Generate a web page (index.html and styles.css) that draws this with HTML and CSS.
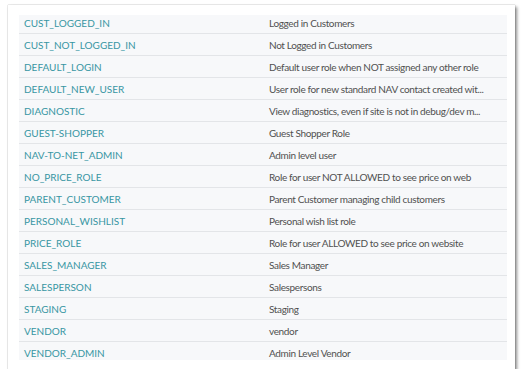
FILE: index.html
```html
<!DOCTYPE html>
<html>
<head>
<meta charset="utf-8">
<link rel="stylesheet" href="styles.css">
</head>
<body>
<div class="card">
  <div class="table">
    <div class="rows">
      <div class="row"><span class="code">CUST_LOGGED_IN</span><span class="desc">Logged in Customers</span></div>
      <div class="row"><span class="code">CUST_NOT_LOGGED_IN</span><span class="desc">Not Logged in Customers</span></div>
      <div class="row"><span class="code">DEFAULT_LOGIN</span><span class="desc">Default user role when NOT assigned any other role</span></div>
      <div class="row"><span class="code">DEFAULT_NEW_USER</span><span class="desc">User role for new standard NAV contact created wit...</span></div>
      <div class="row"><span class="code">DIAGNOSTIC</span><span class="desc">View diagnostics, even if site is not in debug/dev m...</span></div>
      <div class="row"><span class="code">GUEST-SHOPPER</span><span class="desc">Guest Shopper Role</span></div>
      <div class="row"><span class="code">NAV-TO-NET_ADMIN</span><span class="desc">Admin level user</span></div>
      <div class="row"><span class="code">NO_PRICE_ROLE</span><span class="desc">Role for user NOT ALLOWED to see price on web</span></div>
      <div class="row"><span class="code">PARENT_CUSTOMER</span><span class="desc">Parent Customer managing child customers</span></div>
      <div class="row"><span class="code">PERSONAL_WISHLIST</span><span class="desc">Personal wish list role</span></div>
      <div class="row"><span class="code">PRICE_ROLE</span><span class="desc">Role for user ALLOWED to see price on website</span></div>
      <div class="row"><span class="code">SALES_MANAGER</span><span class="desc">Sales Manager</span></div>
      <div class="row"><span class="code">SALESPERSON</span><span class="desc">Salespersons</span></div>
      <div class="row"><span class="code">STAGING</span><span class="desc">Staging</span></div>
      <div class="row"><span class="code">VENDOR</span><span class="desc">vendor</span></div>
      <div class="row"><span class="code">VENDOR_ADMIN</span><span class="desc">Admin Level Vendor</span></div>
    </div>
  </div>
</div>
</body>
</html>
```
FILE: styles.css
```css
html, body {
  margin: 0;
  padding: 0;
  background: #ffffff;
}
body {
  padding: 5px 9px 0 8px;
  font-family: Lato, "Noto Sans", sans-serif;
}
.card {
  width: 507px;
  height: 364px;
  box-sizing: border-box;
  background: #ffffff;
  padding: 10px 8px 0 11px;
  box-shadow: 0 0 1px rgba(0,0,0,0.45), 2px 2px 3px rgba(0,0,0,0.45);
}
.table {
  height: 345px;
  overflow: hidden;
  background: #f7f8fa;
}
.rows {
  margin-top: -3px;
}
.row {
  display: grid;
  grid-template-columns: 245px 1fr;
  height: 22px;
  box-sizing: border-box;
  border-bottom: 1px solid #e3e5e8;
  align-items: center;
  white-space: nowrap;
}
.code {
  padding-left: 5px;
  color: #3796a3;
  font-size: 10px;
}
.desc {
  padding-left: 5px;
  color: #505050;
  font-size: 10px;
  letter-spacing: -0.35px;
}
```
